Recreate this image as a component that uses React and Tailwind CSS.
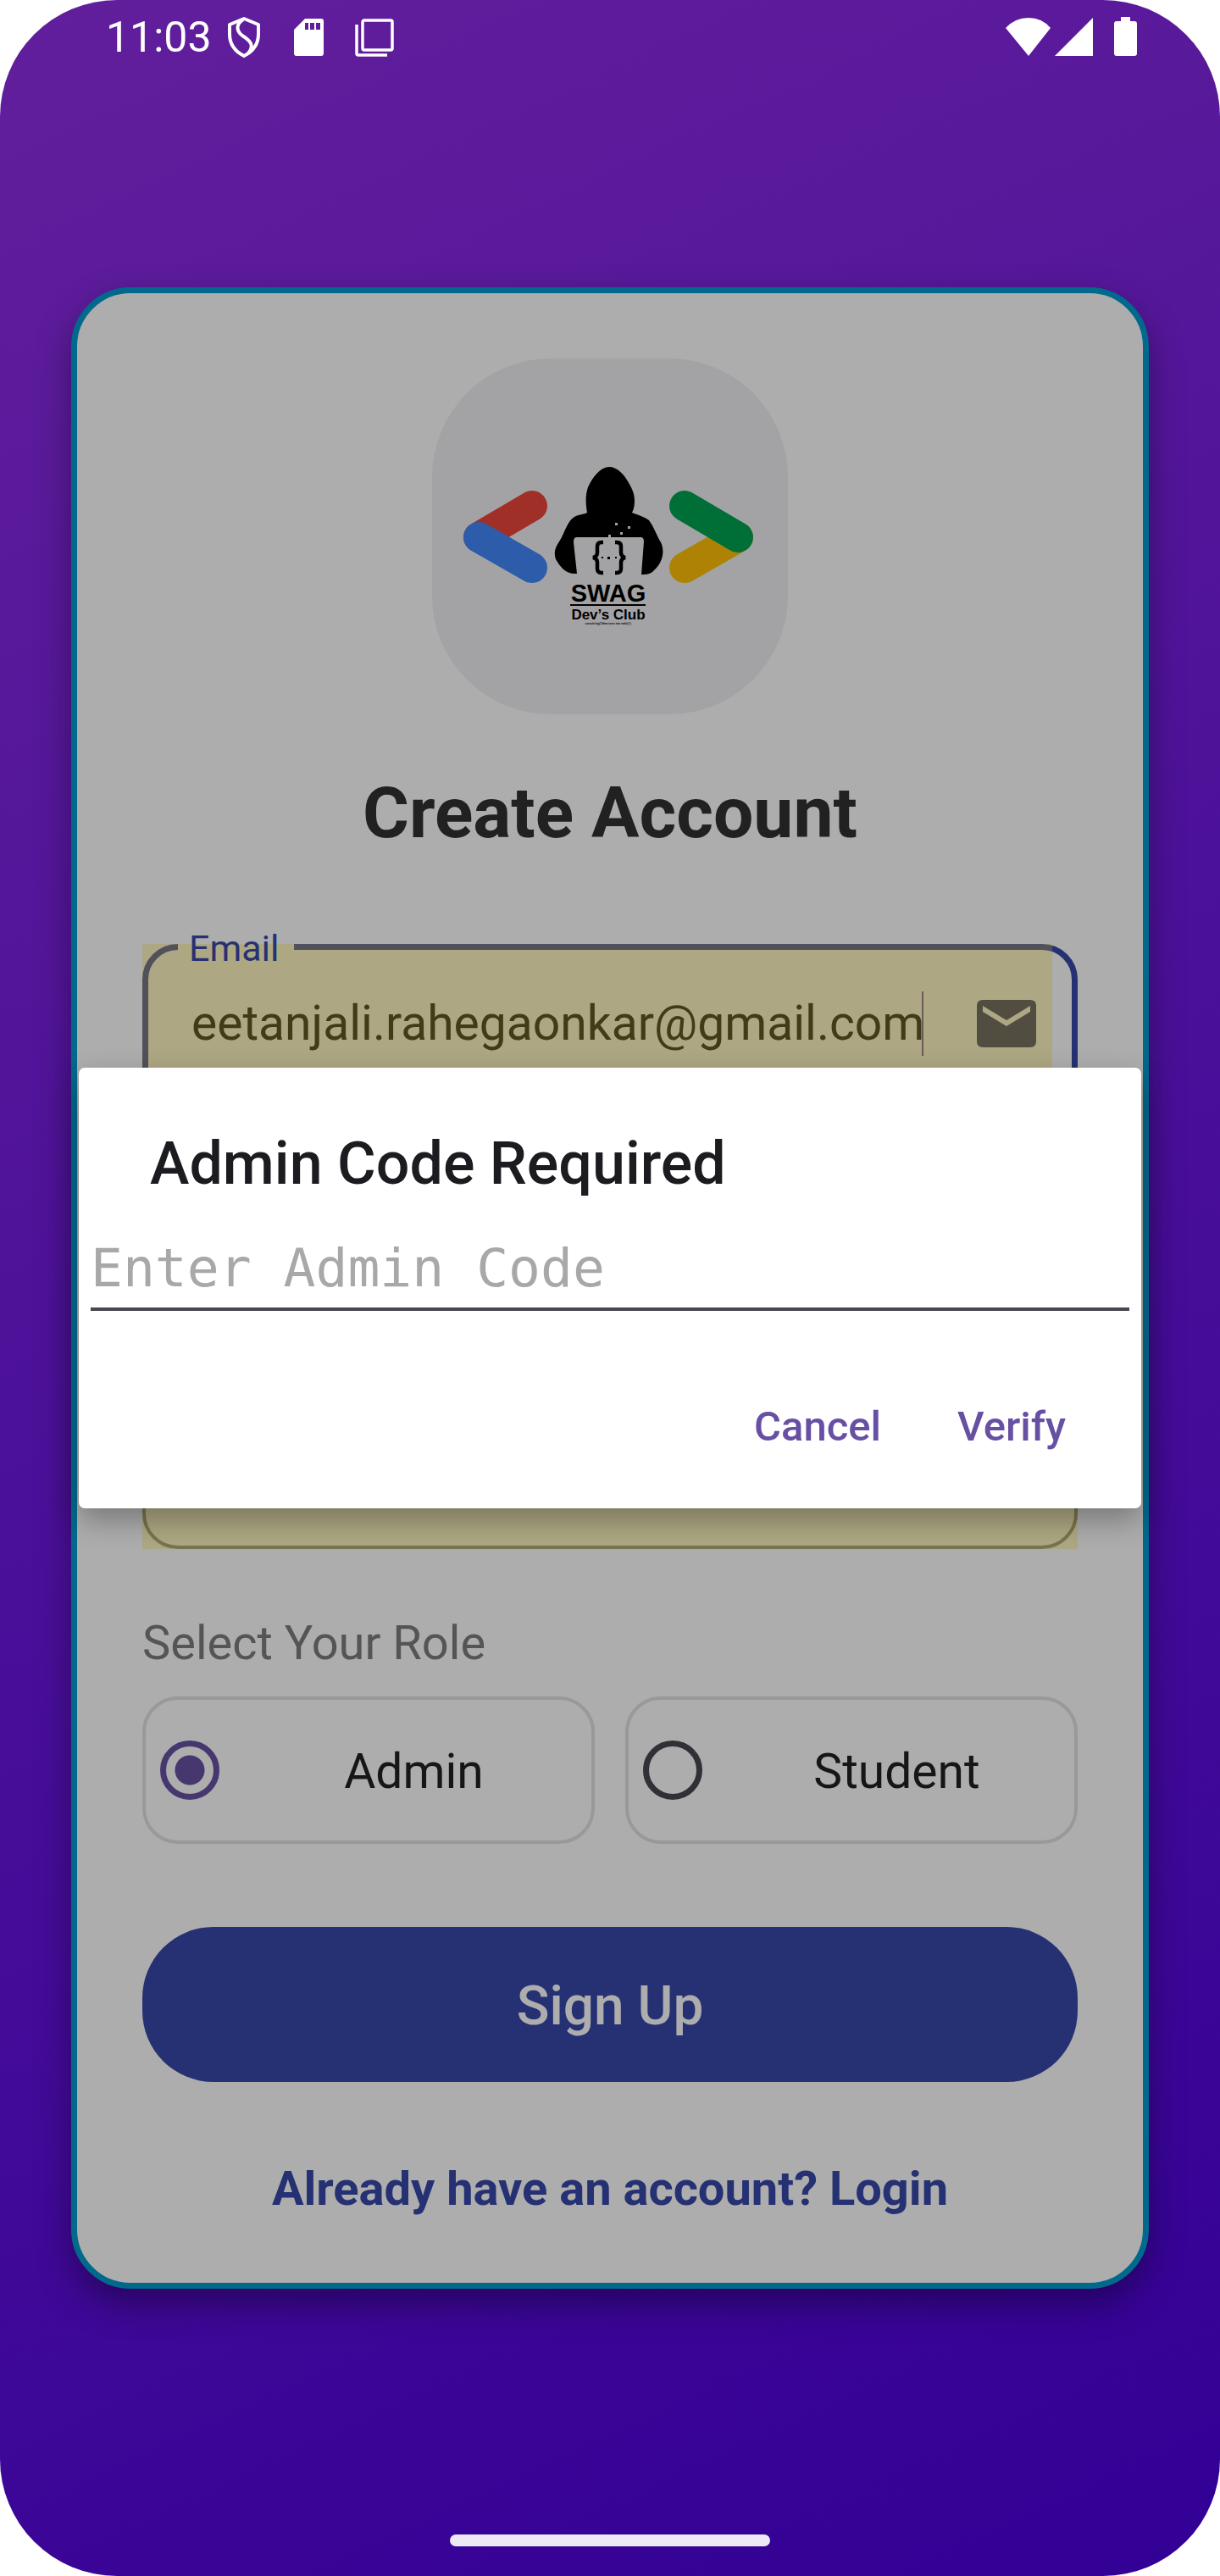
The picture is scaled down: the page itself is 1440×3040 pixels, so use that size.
const roboto = "font-['Roboto',sans-serif]";

function HackerLogo() {
  return (
    <svg viewBox="0 0 420 420" className="size-[420px]" role="img" aria-label="SWAG Dev's Club">
      <g strokeWidth="36" strokeLinecap="round" fill="none">
        <path d="M55 211 118 174" stroke="#a03027" />
        <path d="M55 211 118 247" stroke="#2d5cab" />
        <path d="M298 247 361 211" stroke="#ad8205" />
        <path d="M298 174 361 211" stroke="#006f37" />
      </g>
      <path
        d="M209 128C218 128 226 136 231 145C235 152 239 158 239 168C239 174 238 178 236 182C243 185 251 187 256 191C262 199 266 211 270 217C276 230 270 243 262 250C258 255 252 255 247 255L250 216C250 212 248 211 246 211L171 211C168 211 167 213 167 217L171 254C157 255 151 245 146 237C142 225 149 219 153 211C158 201 161 191 168 187C173 184 179 184 183 182C181 170 181 161 184 152C190 139 199 128 209 128Z"
        fill="#000"
      />
      <g fill="#a3a3a5">
        <rect x="216" y="194" width="3" height="3" />
        <rect x="231" y="198" width="3" height="3" />
        <rect x="222" y="205" width="3" height="3" />
        <rect x="208" y="208" width="3" height="4" />
      </g>
      <g fill="none" stroke="#000" strokeWidth="4.5">
        <path d="M202 217H200Q195 217 195 222V229Q195 234 190 235Q195 236 195 241V248Q195 253 200 253H202" />
        <path d="M216 217H218Q223 217 223 222V229Q223 234 228 235Q223 236 223 241V248Q223 253 218 253H216" />
      </g>
      <path d="M200 234h2v2h-2zM207 234h3v3h-3zM216 234h2v2h-2z" fill="#000" />
      <text x="208" y="287" textAnchor="middle" fontSize="29" fontWeight="700" fontFamily="Liberation Sans, sans-serif">SWAG</text>
      <rect x="163" y="290" width="89" height="2" />
      <text x="208" y="308" textAnchor="middle" fontSize="17" fontWeight="700" fontFamily="Liberation Sans, sans-serif">Dev’s Club</text>
      <text x="208" y="314" textAnchor="middle" fontSize="3" fontWeight="700" fontFamily="Liberation Sans, sans-serif">console.log("Ideas turns into reality");</text>
    </svg>
  );
}

function StatusBar() {
  return (
    <header className="flex h-[88px] items-start justify-between pr-[98px] pl-[125px] text-white">
      <div className="flex pt-[12px]">
        <time className="text-[50px] leading-[64px]">11:03</time>
        <svg viewBox="0 0 40 48" className="mt-[8px] ml-[18px] h-[48px] w-[40px]" fill="none" stroke="currentColor" strokeWidth="4" strokeLinejoin="round">
          <path d="M20 2 37 9V20C37 32 30 41 20 46C10 41 3 32 3 20V9Z" />
          <path d="M19 3C11 8 10 16 18 22C29 29 32 34 25 43" />
        </svg>
        <svg viewBox="0 0 36 45" className="mt-[10px] ml-[39px] h-[45px] w-[36px]" fill="currentColor">
          <path fillRule="evenodd" d="M13 0H32Q35 0 35 3V41Q35 44 32 44H3Q0 44 0 41V13ZM13 5V13H17V5ZM19 5V13H24V5ZM26 5V13H31V5Z" />
        </svg>
        <svg viewBox="0 0 46 46" className="mt-[10px] ml-[36px] size-[46px]" fill="none" stroke="currentColor" strokeWidth="3.5">
          <rect x="9" y="2" width="35" height="35" rx="2" />
          <path d="M2 7V41Q2 43 4 43H38" />
        </svg>
      </div>
      <div className="flex pt-[20px]">
        <svg viewBox="0 0 54 46" className="h-[46px] w-[54px]" fill="currentColor">
          <path d="M0 13Q11 1 27 1T53 13L27 46Z" />
        </svg>
        <svg viewBox="0 0 45 46" className="ml-[4px] h-[46px] w-[45px]" fill="currentColor">
          <path d="M0 46 45 1V46Z" />
        </svg>
        <svg viewBox="0 0 27 46" className="ml-[25px] h-[46px] w-[27px]" fill="currentColor">
          <path d="M8 0H19V5H24Q27 5 27 8V43Q27 46 24 46H3Q0 46 0 43V8Q0 5 3 5H8Z" />
        </svg>
      </div>
    </header>
  );
}

function RoleOption({ id, label, checked }) {
  return (
    <label htmlFor={id} className="flex h-[174px] flex-1 items-center rounded-[42px] border-4 border-[#999] pl-[17px]">
      <input
        id={id}
        type="radio"
        name="role"
        defaultChecked={checked}
        className="size-[70px] shrink-0 appearance-none rounded-full border-[7px] border-[#323037] checked:border-[#47376f] checked:bg-[radial-gradient(circle,#47376f_17px,transparent_18px)]"
      />
      <span className="flex-1 pt-[4px] pl-[20px] text-center text-[57px] leading-[66px] text-[#161616]">{label}</span>
    </label>
  );
}

function AdminDialog() {
  return (
    <div
      role="dialog"
      aria-modal="true"
      aria-labelledby="dialog-title"
      className="absolute inset-x-[93px] top-[1260px] flex h-[520px] flex-col rounded-[7px] bg-white shadow-[0_14px_34px_rgba(0,0,0,0.3)]"
    >
      <h2 id="dialog-title" className="px-[84px] pt-[72px] text-[70px] leading-[82px] font-medium text-[#1c1b1f]">
        Admin Code Required
      </h2>
      <div className="px-[14px] pt-[34px]">
        <input
          type="password"
          aria-label="Enter Admin Code"
          placeholder="Enter Admin Code"
          className="block h-[99px] w-full border-b-4 border-[#49454f] pt-[2px] font-['DejaVu_Sans_Mono',monospace] text-[63px] outline-none placeholder:text-[#a8a8a8]"
        />
      </div>
      <div className="mt-auto flex justify-end gap-[6px] pr-[47px] pb-[12px] text-[49px] font-medium text-[#6750a4]">
        <button type="button" className="h-[168px] px-[42px]">Cancel</button>
        <button type="button" className="h-[168px] px-[42px]">Verify</button>
      </div>
    </div>
  );
}

export default function App() {
  return (
    <div className="bg-white">
      <div className={`${roboto} relative flex min-h-screen flex-col overflow-hidden rounded-[138px] bg-[linear-gradient(155deg,#621f9c,#320096)]`}>
        <StatusBar />
        <main className="mx-[84px] mt-[251px] flex flex-col rounded-[70px] border-[7px] border-[#00698c] bg-[#adadad] px-[77px] pt-[77px] pb-[78px] shadow-[0_18px_42px_rgba(0,0,0,0.36)]">
          <div className="self-center rounded-[140px] bg-[#a3a3a5]">
            <HackerLogo />
          </div>
          <h1 className="mt-[68px] text-center text-[84px] leading-[98px] font-bold text-[#212121]">Create Account</h1>
          <form className="flex flex-col">
            <div className="relative mt-[105px] flex h-[196px] items-center rounded-[42px] border-[7px] border-[#263173] pr-[42px] pb-[8px] pl-[51px]">
              <div className="pointer-events-none absolute -top-[7px] right-[23px] -bottom-[7px] -left-[7px] bg-[rgba(173,156,38,0.31)]" />
              <input
                id="email"
                type="email"
                defaultValue="eetanjali.rahegaonkar@gmail.com"
                className="relative min-w-0 flex-1 bg-transparent text-[57px] text-[#403c18] outline-none"
              />
              <span className="relative mr-[63px] h-[76px] w-[2px] bg-[#6b5a55]" />
              <svg viewBox="0 0 70 56" className="relative h-[56px] w-[70px]" fill="#514e41">
                <path fillRule="evenodd" d="M7 0H63Q70 0 70 7V49Q70 56 63 56H7Q0 56 0 49V7Q0 0 7 0ZM7 7V14L35 31 63 14V7L35 24Z" />
              </svg>
              <label
                htmlFor="email"
                className="absolute -top-[27px] left-[35px] bg-[linear-gradient(#adadad_20px,#ada882_20px)] pr-[18px] pl-[13px] text-[43px] leading-[51px] text-[#263173]"
              >
                Email
              </label>
            </div>
            <div className="mt-[322px] bg-[#ada882]">
              <input type="password" aria-label="Password" className="block h-[196px] w-full rounded-[42px] border-4 border-[#79744d] px-[56px] text-[57px] outline-none" />
            </div>
            <fieldset>
              <legend className="pt-[78px] text-[56px] leading-[66px] text-[#555]">Select Your Role</legend>
              <div className="mt-[30px] flex gap-[36px]">
                <RoleOption id="role-admin" label="Admin" checked />
                <RoleOption id="role-student" label="Student" />
              </div>
            </fieldset>
            <button type="submit" className="mt-[98px] h-[183px] rounded-[84px] bg-[#263173] pt-[4px] text-[64px] font-medium text-[#adadad]">
              Sign Up
            </button>
          </form>
          <a href="#login" className="mt-[93px] text-center text-[56px] leading-[66px] font-bold text-[#263173]">
            Already have an account? Login
          </a>
        </main>
        <div className="mx-auto mt-auto mb-[35px] h-[14px] w-[378px] rounded-full bg-[#eeeaf5]" />
        <AdminDialog />
      </div>
    </div>
  );
}
